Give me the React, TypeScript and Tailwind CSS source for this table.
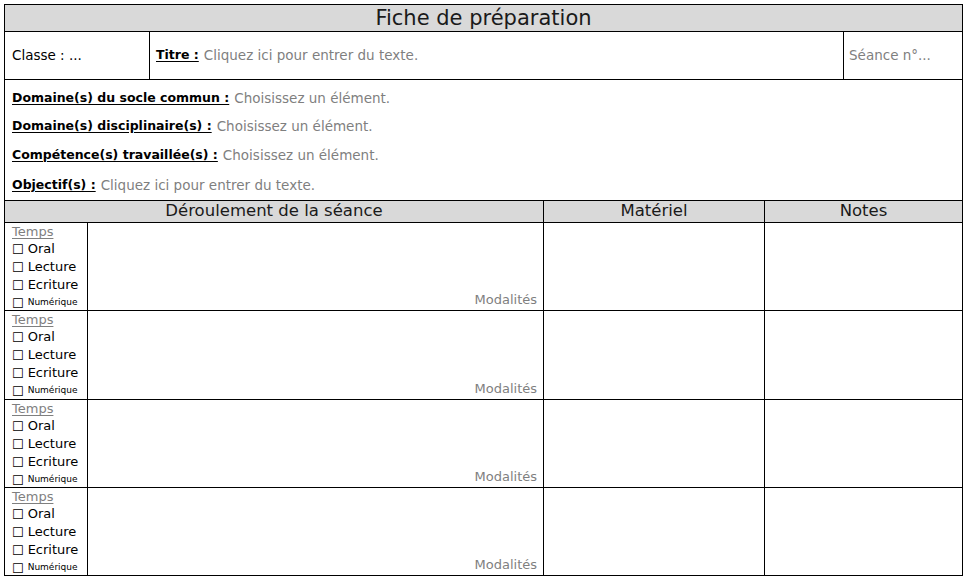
const font = { fontFamily: '"DejaVu Sans", "Liberation Sans", sans-serif' };

const infoLines = [
  { label: "Domaine(s) du socle commun :", value: "Choisissez un élément.", cls: "h-[28px]" },
  { label: "Domaine(s) disciplinaire(s) :", value: "Choisissez un élément.", cls: "h-[28px]" },
  { label: "Compétence(s) travaillée(s) :", value: "Choisissez un élément.", cls: "h-[30px]" },
  { label: "Objectif(s) :", value: "Cliquez ici pour entrer du texte.", cls: "h-[30px]" },
];

const rowHeights = ["h-[88px]", "h-[89px]", "h-[88px]", "h-[87px]"];

function Check({ label, small }: { label: string; small?: boolean }) {
  return (
    <div className="flex h-[18px] items-center gap-[4px] text-[13px] text-black">
      <span className="text-[13px] leading-none">☐</span>
      <span className={small ? "text-[9px]" : ""}>{label}</span>
    </div>
  );
}

function SessionRow({ h, last }: { h: string; last: boolean }) {
  return (
    <div className={`flex ${h} ${last ? "" : "border-b border-black"}`}>
      <div className="w-[83px] border-r border-black pl-[7px] pt-[1px]">
        <div className="flex h-[16px] items-center text-[13px] text-[#7f7f7f] underline underline-offset-2">
          Temps
        </div>
        <Check label="Oral" />
        <Check label="Lecture" />
        <Check label="Ecriture" />
        <Check label="Numérique" small />
      </div>
      <div className="flex w-[456px] items-end justify-end border-r border-black pb-[1px] pr-[6px] text-[13px] text-[#7f7f7f]">
        Modalités
      </div>
      <div className="w-[221px] border-r border-black" />
      <div className="flex-1" />
    </div>
  );
}

export default function App() {
  return (
    <div className="min-h-[580px] bg-white pl-[4px] pt-[4px]" style={font}>
      <div className="w-[959px] border border-black">
        <div className="flex h-[27px] items-center justify-center border-b border-black bg-[#d9d9d9] pt-[1px] text-[21px] text-[#1a1a1a]">
          Fiche de préparation
        </div>

        <div className="flex h-[48px] border-b border-black text-[13.5px]">
          <div className="flex w-[145px] items-center border-r border-black pl-[7px] text-black">Classe : ...</div>
          <div className="flex flex-1 items-center pl-[6px]">
            <span className="text-[12.5px] font-bold text-black underline underline-offset-2">Titre :</span>
            <span className="ml-[5px] text-[#7f7f7f]">Cliquez ici pour entrer du texte.</span>
          </div>
          <div className="flex w-[119px] items-center border-l border-black pl-[5px] text-[#7f7f7f]">Séance n°...</div>
        </div>

        <div className="h-[121px] border-b border-black pl-[7px] pt-[4px] text-[13.5px]">
          {infoLines.map((l) => (
            <div key={l.label} className={`flex items-center ${l.cls}`}>
              <span className="text-[12.5px] font-bold text-black underline underline-offset-2">{l.label}</span>
              <span className="ml-[5px] text-[#7f7f7f]">{l.value}</span>
            </div>
          ))}
        </div>

        <div className="flex h-[22px] border-b border-black bg-[#d9d9d9] text-[16.5px] text-[#1a1a1a]">
          <div className="flex w-[539px] items-center justify-center border-r border-black">Déroulement de la séance</div>
          <div className="flex w-[221px] items-center justify-center border-r border-black">Matériel</div>
          <div className="flex flex-1 items-center justify-center">Notes</div>
        </div>

        {rowHeights.map((h, i) => (
          <SessionRow key={i} h={h} last={i === rowHeights.length - 1} />
        ))}
      </div>
    </div>
  );
}
